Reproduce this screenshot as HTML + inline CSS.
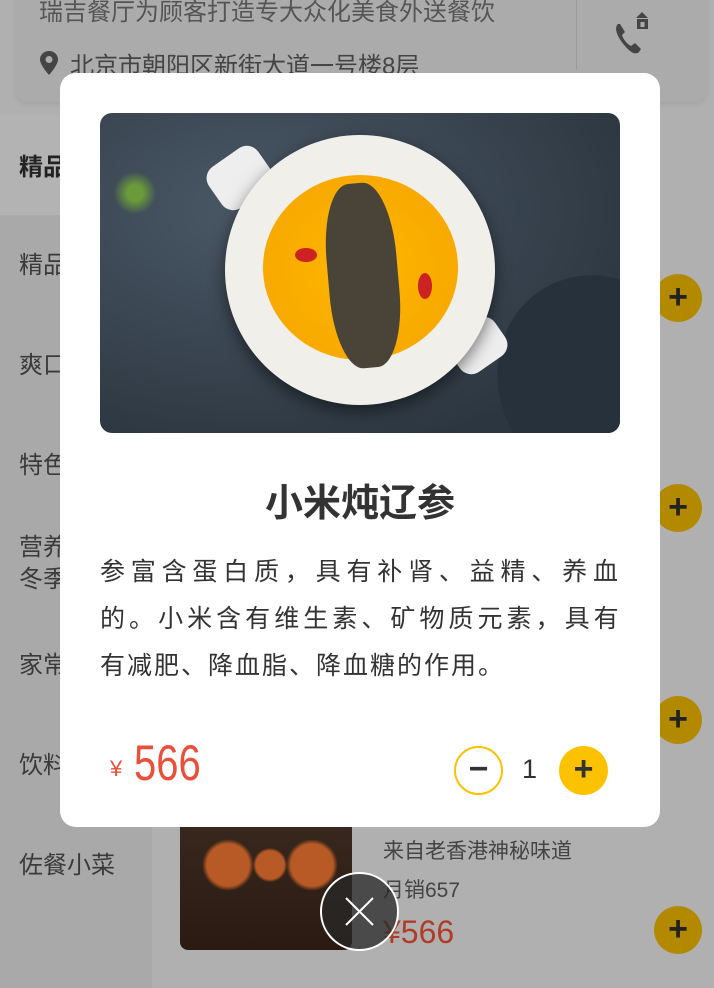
<!DOCTYPE html>
<html><head><meta charset="utf-8"><style>
*{margin:0;padding:0;box-sizing:border-box}
body{width:714px;height:988px;overflow:hidden;background:#b0b0b0;font-family:"Liberation Sans","Noto Sans CJK SC",sans-serif;position:relative}
.abs{position:absolute}
.side{left:0;top:115px;width:152px;height:873px;background:#a9a9a9}
.si{position:absolute;left:19px;font-size:24px;color:#3a3a3a;line-height:32px}
.plus{position:absolute;width:48px;height:48px;border-radius:50%;background:#b38900;color:#222;font-size:34px;line-height:46px;text-align:center;font-weight:bold}
.d{white-space:nowrap;width:520px}
.j{text-align:justify;text-align-last:justify}
</style></head><body>
<div class="abs" style="left:16px;top:-20px;width:690px;height:122px;background:#ababab;border-radius:12px;box-shadow:0 2px 6px rgba(0,0,0,.08)"></div>
<div class="abs" style="left:39px;top:-8px;font-size:24px;color:#555">瑞吉餐厅为顾客打造专大众化美食外送餐饮</div>
<svg class="abs" style="left:38px;top:50px" width="22" height="26" viewBox="0 0 22 26"><path d="M11 1C5.5 1 2 5 2 9.5 2 15 11 25 11 25s9-10 9-15.5C20 5 16.5 1 11 1z" fill="#444"/><circle cx="11" cy="9.5" r="3.5" fill="#ababab"/></svg>
<div class="abs" style="left:70px;top:46px;font-size:24px;color:#444">北京市朝阳区新街大道一号楼8层</div>
<div class="abs" style="left:576px;top:0;width:1px;height:70px;background:#999"></div>
<svg class="abs" style="left:612px;top:10px" width="42" height="45" viewBox="0 0 42 45"><path d="M6 14c-5 4 0 16 12 27 4 3 7 3 9 1l2-3-6-6-4 3c-4-2-8-7-9-11l3-3-5-8z" fill="#444"/><path d="M24 8l6-6 6 6z M25 9h11v10h-11z" fill="#444"/><rect x="28.5" y="12" width="4" height="5" fill="#ababab"/></svg>
<div class="abs side"></div>
<div class="abs" style="left:0;top:115px;width:152px;height:100px;background:#b3b3b3"></div>
<div class="si" style="top:152px;font-weight:bold;color:#222">精品套餐</div>
<div class="si" style="top:250px">精品套餐</div>
<div class="si" style="top:350px">爽口凉菜</div>
<div class="si" style="top:450px">特色菜品</div>
<div class="si" style="top:532px">营养汤品<br>冬季</div>
<div class="si" style="top:650px">家常小炒</div>
<div class="si" style="top:750px">饮料酒水</div>
<div class="si" style="top:850px">佐餐小菜</div>
<div class="plus" style="left:654px;top:274px">+</div>
<div class="plus" style="left:654px;top:484px">+</div>
<div class="plus" style="left:654px;top:696px">+</div>
<div class="plus" style="left:654px;top:906px">+</div>
<div class="abs" style="left:180px;top:800px;width:172px;height:150px;border-radius:8px;background:linear-gradient(#3a2a20,#2a1a12)"></div>
<div class="abs" style="left:200px;top:830px;width:140px;height:70px;background:radial-gradient(circle at 20% 50%,#b85a25 18%,transparent 22%),radial-gradient(circle at 50% 50%,#b85a25 18%,transparent 22%),radial-gradient(circle at 80% 50%,#b85a25 18%,transparent 22%)"></div>
<div class="abs" style="left:383px;top:835px;font-size:21px;color:#444">来自老香港神秘味道</div>
<div class="abs" style="left:383px;top:874px;font-size:21px;color:#444">月销657</div>
<div class="abs" style="left:383px;top:914px;font-size:32px;color:#b03c28">¥566</div>

<div class="abs" style="left:60px;top:73px;width:600px;height:754px;background:#fff;border-radius:16px"></div>
<div class="abs" style="left:100px;top:113px;width:520px;height:320px;border-radius:12px;overflow:hidden;background:radial-gradient(ellipse at 30% 30%,#4a5866,#2c3640 80%)">
<div class="abs" style="left:400px;top:160px;width:200px;height:220px;border-radius:50%;background:#27313b;transform:rotate(-30deg)"></div>
<div class="abs" style="left:110px;top:40px;width:60px;height:50px;border-radius:14px;background:#eee;transform:rotate(-35deg)"></div>
<div class="abs" style="left:350px;top:210px;width:55px;height:45px;border-radius:14px;background:#eee;transform:rotate(-35deg)"></div>
<div class="abs" style="left:125px;top:22px;width:270px;height:270px;border-radius:50%;background:#f0efea;box-shadow:0 6px 16px rgba(0,0,0,.5)"></div>
<div class="abs" style="left:163px;top:62px;width:195px;height:185px;border-radius:50%;background:radial-gradient(#ffb700,#f4a400)"></div>
<div class="abs" style="left:228px;top:70px;width:70px;height:185px;border-radius:40%;background:#4a4438;transform:rotate(-5deg)"></div>
<div class="abs" style="left:195px;top:135px;width:22px;height:14px;border-radius:50%;background:#c22"></div>
<div class="abs" style="left:318px;top:160px;width:14px;height:26px;border-radius:50%;background:#c22"></div>
<div class="abs" style="left:0;top:40px;width:70px;height:80px;background:radial-gradient(circle,#6a9a3a 15%,transparent 40%)"></div>
</div>
<div class="abs" style="left:60px;top:472px;width:600px;text-align:center;font-size:38px;font-weight:bold;color:#333">小米炖辽参</div>
<div class="abs" style="left:100px;top:549px;font-size:25px;line-height:47px;letter-spacing:2px;color:#333">
<div class="d j">参富含蛋白质，具有补肾、益精、养血</div>
<div class="d j" style="letter-spacing:1.4px">的。小米含有维生素、矿物质元素，具有</div>
<div class="d">有减肥、降血脂、降血糖的作用。</div></div>
<div class="abs" style="left:110px;top:756px;font-size:22px;color:#e8503a">¥</div>
<div class="abs" style="left:134px;top:734px;font-size:50px;color:#e8503a;transform:scaleX(.8);transform-origin:left">566</div>
<div class="abs" style="left:454px;top:746px;width:49px;height:49px;border-radius:50%;border:2px solid #fcc200;text-align:center;line-height:42px;font-size:34px;font-weight:bold;color:#333">−</div>
<div class="abs" style="left:522px;top:754px;font-size:27px;color:#333">1</div>
<div class="abs" style="left:559px;top:746px;width:49px;height:49px;border-radius:50%;background:#fcc200;text-align:center;line-height:46px;font-size:34px;font-weight:bold;color:#333">+</div>

<div class="abs" style="left:320px;top:872px;width:79px;height:79px;border-radius:50%;border:2px solid #fff;background:rgba(40,40,40,.75)"></div>
<svg class="abs" style="left:344px;top:896px" width="31" height="31"><path d="M2 2L29 29M29 2L2 29" stroke="#fff" stroke-width="2"/></svg>
</body></html>
